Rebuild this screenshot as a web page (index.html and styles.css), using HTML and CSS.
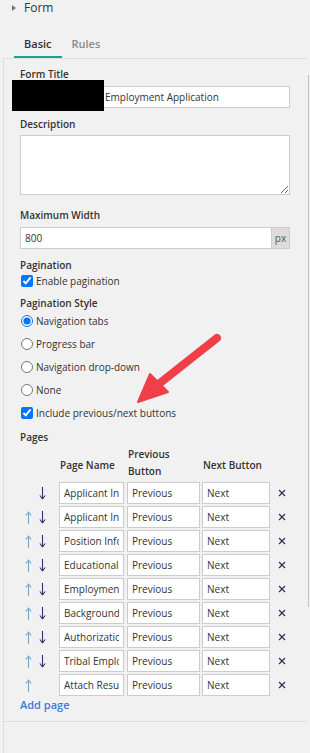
FILE: index.html
```html
<!DOCTYPE html>
<html lang="en">
<head>
  <meta charset="UTF-8" />
  <meta name="viewport" content="width=device-width, initial-scale=1.0" />
  <title>Form settings</title>
  <link rel="stylesheet" href="styles.css">
</head>
<body>
  <div class="page">
    <div class="section-head">
      <span class="caret"></span>
      <span>Form</span>
    </div>

    <div class="tabs">
      <div class="tab active">Basic</div>
      <div class="tab">Rules</div>
    </div>

    <div class="panel">
      <div class="form-body">
        <div class="field">
          <label class="label">Form Title</label>
          <input type="text" class="text-input title-input" value="Employment Application">
        </div>

        <div class="field field-desc">
          <label class="label label-tight">Description</label>
          <textarea class="text-area"></textarea>
        </div>

        <div class="field">
          <label class="label">Maximum Width</label>
          <div class="input-group">
            <input type="text" class="text-input" value="800">
            <span class="addon">px</span>
          </div>
        </div>

        <div class="field field-pag">
          <label class="label label-flat">Pagination</label>
          <label class="check"><input type="checkbox" checked> Enable pagination</label>
        </div>

        <div class="field field-style">
          <label class="label label-style">Pagination Style</label>
          <label class="option"><input type="radio" name="pstyle" checked> Navigation tabs</label>
          <label class="option"><input type="radio" name="pstyle"> Progress bar</label>
          <label class="option"><input type="radio" name="pstyle"> Navigation drop-down</label>
          <label class="option"><input type="radio" name="pstyle"> None</label>
          <label class="option"><input type="checkbox" checked> Include previous/next buttons</label>
        </div>

        <label class="label label-flat">Pages</label>
        <div class="pages pages-head">
          <div></div>
          <div class="th">Page Name</div>
          <div class="th th-wrap">Previous Button</div>
          <div class="th">Next Button</div>
          <div></div>
        </div>
        <div class="pages" id="pageRows"></div>

        <a class="add-link" href="#">Add page</a>
      </div>
    </div>

    <div class="redact"></div>
    <div class="scroll-thumb"></div>

    <svg class="callout" width="100" height="90" viewBox="0 0 100 90">
      <line x1="87" y1="13" x2="30" y2="58" stroke="#ef3f48" stroke-width="8" stroke-linecap="round"/>
      <polygon points="8,77 20,49 38,67" fill="#ef3f48" stroke="#ef3f48" stroke-width="2" stroke-linejoin="round"/>
    </svg>
  </div>

  <script>
    const pages = [
      "Applicant Information",
      "Applicant Information (cont.)",
      "Position Information",
      "Educational Background",
      "Employment History",
      "Background Check",
      "Authorization",
      "Tribal Employment Preference",
      "Attach Resume"
    ];

    const up = '<svg width="7" height="13" viewBox="0 0 7 13"><path d="M3.5 1.5V13M0.8 4.5L3.5 1.2L6.2 4.5" fill="none" stroke="#7ea6cc" stroke-width="1.1"/></svg>';
    const down = '<svg width="7" height="13" viewBox="0 0 7 13"><path d="M3.5 0V11.5M0.8 8.5L3.5 11.8L6.2 8.5" fill="none" stroke="#34346a" stroke-width="1.1"/></svg>';
    const del = '<svg width="8" height="8" viewBox="0 0 8 8"><path d="M1 1L7 7M7 1L1 7" stroke="#2f2f62" stroke-width="1.2"/></svg>';

    const rows = document.getElementById("pageRows");
    pages.forEach((name, i) => {
      const first = i === 0;
      const last = i === pages.length - 1;
      rows.innerHTML +=
        '<div class="moves">' +
          '<span class="mv' + (first ? ' hide' : '') + '">' + up + '</span>' +
          '<span class="mv' + (last ? ' hide' : '') + '">' + down + '</span>' +
        '</div>' +
        '<input type="text" class="cell-input w-name" value="' + name + '">' +
        '<input type="text" class="cell-input w-prev" value="Previous">' +
        '<input type="text" class="cell-input w-next" value="Next">' +
        '<div class="del">' + del + '</div>';
    });
  </script>
</body>
</html>
```

FILE: styles.css
```css
body {
  margin: 0;
  background-color: #f1f1f1;
  font-family: "Open Sans", Arial, sans-serif;
  font-size: 10px;
  color: #333;
}

.page {
  position: relative;
  height: 753px;
  overflow: hidden;
  display: flex;
  flex-direction: column;
}

.section-head {
  display: flex;
  align-items: center;
  height: 15px;
  padding-left: 12px;
  gap: 8px;
  font-size: 12px;
  color: #333;
}

.caret {
  width: 0;
  height: 0;
  border-left: 4px solid #777;
  border-top: 3.5px solid transparent;
  border-bottom: 3.5px solid transparent;
}

.tabs {
  display: flex;
  margin: 15px 0 0 14px;
}

.tab {
  padding: 6px 10px 4px;
  line-height: 16px;
  font-size: 11px;
  font-weight: 600;
  color: #8a8a8a;
  border-bottom: 2px solid transparent;
}

.tab.active {
  color: #333;
  border-bottom-color: #1aa688;
}

.panel {
  flex: 1;
  margin: 0 3px;
  border-top: 1px solid #ddd;
  border-left: 1px solid #ddd;
}

.form-body {
  padding: 7px 17px 8px 16px;
  border-bottom: 1px solid #ddd;
}

.field {
  margin-bottom: 8px;
}

.field-desc {
  margin-bottom: 12px;
}

.field-pag {
  margin-bottom: 6px;
}

.field-style {
  margin-bottom: 5px;
}

.label {
  display: block;
  font-weight: 600;
  line-height: 16px;
  margin-bottom: 4px;
  color: #333;
}

.label-tight {
  margin-bottom: 3px;
}

.label-flat {
  margin-bottom: 0;
}

.label-style {
  margin-bottom: -2px;
}

.text-input {
  display: block;
  box-sizing: border-box;
  width: 100%;
  height: 22px;
  border: 1px solid #ccc;
  background: #fff;
  font: inherit;
  color: #333;
  padding: 0 4px;
  outline: none;
}

.title-input {
  text-indent: 80px;
}

.text-area {
  display: block;
  box-sizing: border-box;
  width: 100%;
  height: 60px;
  border: 1px solid #ccc;
  background: #fff;
  font: inherit;
  margin: 0;
}

.input-group {
  display: flex;
}

.input-group .text-input {
  flex: 1;
  border-right: none;
}

.addon {
  width: 19px;
  height: 22px;
  box-sizing: border-box;
  border: 1px solid #ccc;
  background: #ddd;
  color: #555;
  line-height: 20px;
  text-align: center;
}

.check, .option {
  display: flex;
  align-items: center;
  gap: 2px;
  line-height: 16px;
}

.option {
  height: 23px;
}

.check input, .option input {
  width: 12px;
  height: 12px;
  margin: 0 1px 0 1px;
  accent-color: #0075ff;
}

.pages {
  display: grid;
  grid-template-columns: 39px 68px 75px 68px 1fr;
  row-gap: 2px;
  margin-top: 2px;
}

.pages-head {
  margin-top: 1px;
}

.th {
  font-weight: 600;
  line-height: 17px;
  padding: 4px 0 0 1px;
  align-self: center;
}

.th-wrap {
  padding-top: 0;
  width: 60px;
}

.moves {
  display: flex;
  align-items: center;
  gap: 7px;
  padding-left: 5px;
}

.mv {
  display: flex;
}

.mv.hide {
  visibility: hidden;
}

.cell-input {
  box-sizing: border-box;
  height: 22px;
  border: 1px solid #ccc;
  background: #fff;
  font: inherit;
  color: #333;
  padding: 0 4px;
  margin: 0;
}

.w-name {
  width: 65px;
}

.w-prev {
  width: 73px;
}

.w-next {
  width: 68px;
}

.del {
  display: flex;
  align-items: center;
  padding-left: 8px;
}

.add-link {
  display: block;
  margin-top: 1px;
  line-height: 16px;
  font-size: 11px;
  font-weight: 600;
  color: #3a7bd5;
  text-decoration: none;
}

/* overlays */
.redact {
  position: absolute;
  left: 12px;
  top: 80px;
  width: 92px;
  height: 31px;
  background: #000;
}

.scroll-thumb {
  position: absolute;
  left: 308px;
  top: 75px;
  width: 1px;
  height: 532px;
  background: #c2c2c2;
}

.callout {
  position: absolute;
  left: 130px;
  top: 325px;
}
```
